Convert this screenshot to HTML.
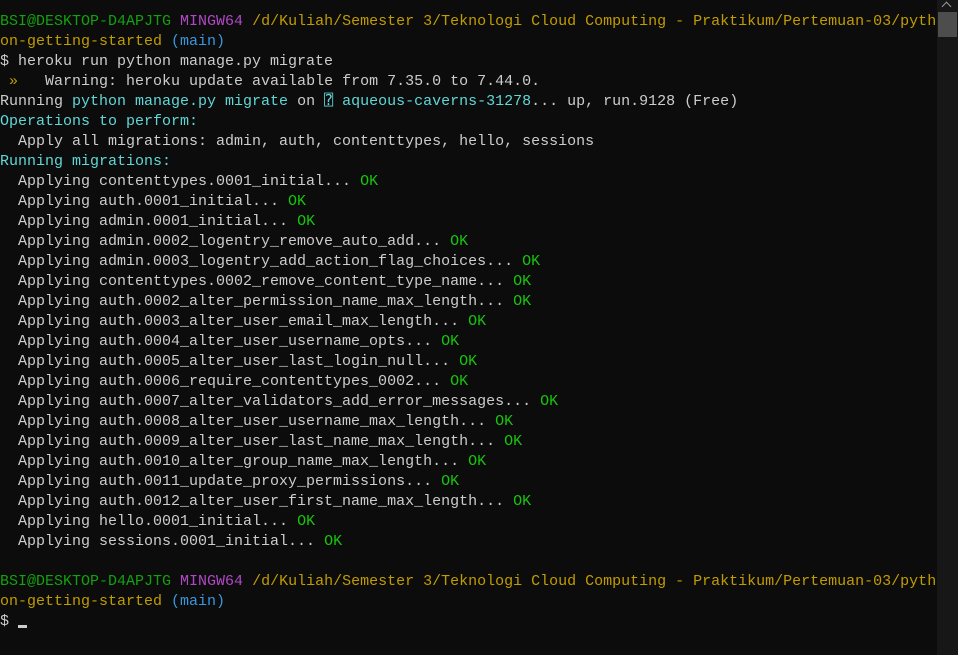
<!DOCTYPE html>
<html><head><meta charset="utf-8"><style>
html,body{margin:0;padding:0;background:#0c0c0c;width:958px;height:655px;overflow:hidden}
pre{margin:0;position:absolute;left:0;top:12px;font-family:"Liberation Mono",monospace;font-size:15px;line-height:20px;color:#cccccc;white-space:pre}
.g{color:#13a10e}.p{color:#b148c6}.y{color:#c19c00}.c{color:#3a96dd}.b{color:#61d6d6}.k{color:#16c60c}
.sb{position:absolute;left:937px;top:0;width:21px;height:655px;background:#171717}
.th{position:absolute;left:938px;top:12px;width:19px;height:25px;background:#4d4d4d}
.ar{position:absolute;left:943px;top:3px;width:6px;height:6px;border-left:1.5px solid #999;border-top:1.5px solid #999;transform:rotate(45deg)}
.cur{display:inline-block;width:9px;height:3px;background:#ccc;vertical-align:-3px}
</style></head><body>
<pre><span class="g">BSI@DESKTOP-D4APJTG</span> <span class="p">MINGW64</span> <span class="y">/d/Kuliah/Semester 3/Teknologi Cloud Computing - Praktikum/Pertemuan-03/pyth
on-getting-started</span> <span class="c">(main)</span>
$ heroku run python manage.py migrate
<span class="y"> »</span>   Warning: heroku update available from 7.35.0 to 7.44.0.
Running <span class="b">python manage.py migrate</span> on <span class="b">⍰ aqueous-caverns-31278</span>... up, run.9128 (Free)
<span class="b">Operations to perform:</span>
  Apply all migrations: admin, auth, contenttypes, hello, sessions
<span class="b">Running migrations:</span>
  Applying contenttypes.0001_initial... <span class="k">OK</span>
  Applying auth.0001_initial... <span class="k">OK</span>
  Applying admin.0001_initial... <span class="k">OK</span>
  Applying admin.0002_logentry_remove_auto_add... <span class="k">OK</span>
  Applying admin.0003_logentry_add_action_flag_choices... <span class="k">OK</span>
  Applying contenttypes.0002_remove_content_type_name... <span class="k">OK</span>
  Applying auth.0002_alter_permission_name_max_length... <span class="k">OK</span>
  Applying auth.0003_alter_user_email_max_length... <span class="k">OK</span>
  Applying auth.0004_alter_user_username_opts... <span class="k">OK</span>
  Applying auth.0005_alter_user_last_login_null... <span class="k">OK</span>
  Applying auth.0006_require_contenttypes_0002... <span class="k">OK</span>
  Applying auth.0007_alter_validators_add_error_messages... <span class="k">OK</span>
  Applying auth.0008_alter_user_username_max_length... <span class="k">OK</span>
  Applying auth.0009_alter_user_last_name_max_length... <span class="k">OK</span>
  Applying auth.0010_alter_group_name_max_length... <span class="k">OK</span>
  Applying auth.0011_update_proxy_permissions... <span class="k">OK</span>
  Applying auth.0012_alter_user_first_name_max_length... <span class="k">OK</span>
  Applying hello.0001_initial... <span class="k">OK</span>
  Applying sessions.0001_initial... <span class="k">OK</span>

<span class="g">BSI@DESKTOP-D4APJTG</span> <span class="p">MINGW64</span> <span class="y">/d/Kuliah/Semester 3/Teknologi Cloud Computing - Praktikum/Pertemuan-03/pyth
on-getting-started</span> <span class="c">(main)</span>
$ <span class="cur"></span></pre>
<div class="sb"></div><div class="th"></div><div class="ar"></div>
</body></html>
